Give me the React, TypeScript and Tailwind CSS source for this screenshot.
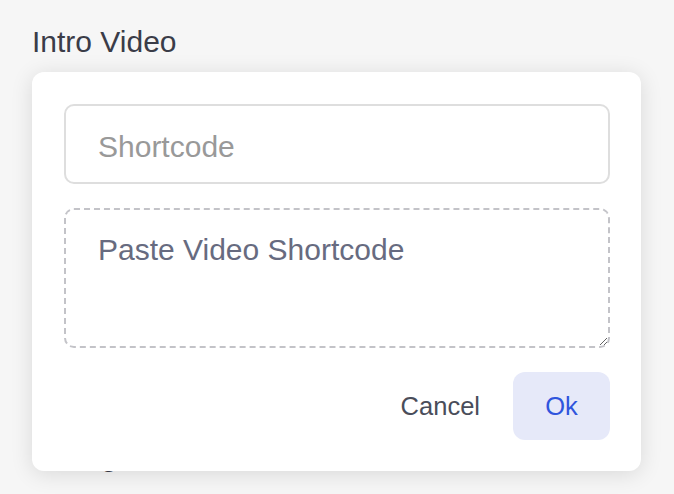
import React from "react";

export default function App() {
  return (
    <div
      className="min-h-screen bg-[#f6f6f6] pl-8 pt-[25px]"
      style={{ fontFamily: '"Liberation Sans", Arial, sans-serif' }}
    >
      <div className="text-[30px] leading-[34px] text-[#3a3c48]">Intro Video</div>
      <div className="relative mt-[13px]">
        <div className="pl-[2px] pt-[367px] text-[30px] leading-[34px] text-[#3a3c48]">Background</div>
        <div className="absolute left-0 top-0 z-10 w-[609px] rounded-[12px] bg-white pb-[31px] pl-8 pr-[31px] pt-8 shadow-[0_3px_22px_rgba(0,0,0,0.12)]">
          <input
            type="text"
            placeholder="Shortcode"
            className="block h-[80px] w-full rounded-[10px] border-2 border-[#dedede] bg-white pl-[32px] pr-[31px] pt-[6px] text-[30px] text-[#333] outline-none placeholder:text-[#999999]"
          />
          <textarea
            placeholder="Paste Video Shortcode"
            className="mt-6 block h-[140px] w-full rounded-[10px] border-2 border-dashed border-[#c3c3c8] bg-white pl-[32px] pr-[31px] pt-[23px] text-[30px] leading-[34px] text-[#333] outline-none placeholder:text-[#676b80]"
          />
          <div className="mt-6 flex items-center justify-end">
            <button className="mr-[33px] text-[25.5px] text-[#4a4d5a]">Cancel</button>
            <button className="h-[68px] w-[97px] rounded-[12px] bg-[#e6e9f9] text-[25.5px] text-[#2f55dd]">
              Ok
            </button>
          </div>
        </div>
      </div>
    </div>
  );
}
